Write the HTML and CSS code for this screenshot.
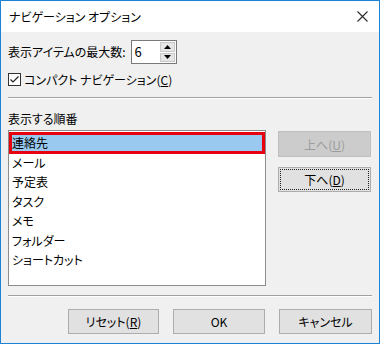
FILE: index.html
```html
<!DOCTYPE html>
<html lang="ja">
<head>
<meta charset="utf-8">
<link rel="stylesheet" href="styles.css">
</head>
<body>
<div class="win">
  <div class="titlebar">
    <span class="title">ナビゲーション オプション</span>
    <svg class="close" width="11" height="11" viewBox="0 0 11 11"><path d="M0.5 0.5L10.5 10.5M10.5 0.5L0.5 10.5" stroke="#2b2b2b" stroke-width="1.1" fill="none"/></svg>
  </div>
  <div class="content">
    <div class="row-max">
      <span class="lbl">表示アイテムの最大数:</span>
      <div class="spin">
        <span class="spin-val">6</span>
        <div class="spin-btns">
          <div class="sb"><svg width="7" height="4" viewBox="0 0 7 4"><path d="M0 4L3.5 0L7 4Z" fill="#000"/></svg></div>
          <div class="sb"><svg width="7" height="4" viewBox="0 0 7 4"><path d="M0 0L3.5 4L7 0Z" fill="#000"/></svg></div>
        </div>
      </div>
    </div>
    <div class="row-check">
      <svg class="cb" width="13" height="13" viewBox="0 0 13 13"><rect x="0.5" y="0.5" width="12" height="12" fill="#fff" stroke="#333"/><path d="M2.5 6.5L5 9L10.5 3.5" stroke="#222" stroke-width="1.2" fill="none"/></svg>
      <span class="lbl">コンパクト ナビゲーション(<u>C</u>)</span>
    </div>
    <div class="sep"></div>
    <div class="lbl order-lbl">表示する順番</div>
    <div class="order">
      <ul class="list">
        <li class="sel">連絡先</li>
        <li>メール</li>
        <li>予定表</li>
        <li>タスク</li>
        <li>メモ</li>
        <li>フォルダー</li>
        <li>ショートカット</li>
      </ul>
      <div class="side">
        <button class="btn disabled">上へ(<u>U</u>)</button>
        <button class="btn focus">下へ(<u>D</u>)</button>
      </div>
    </div>
    <div class="sep sep2"></div>
    <div class="footer">
      <button class="btn b1">リセット(<u>R</u>)</button>
      <button class="btn b2">OK</button>
      <button class="btn b3">キャンセル</button>
    </div>
  </div>
</div>
</body>
</html>
```
FILE: styles.css
```css
* { box-sizing: border-box; }
html, body { margin: 0; padding: 0; background: #fff; }
body {
  font-family: "Noto Sans CJK JP", "Noto Sans", sans-serif;
  font-size: 12px;
  font-feature-settings: "palt" 1;
  color: #000;
}
.win {
  width: 380px;
  height: 344px;
  border: 1px solid #1883d7;
  background: #f0f0f0;
  display: flex;
  flex-direction: column;
}
.titlebar {
  height: 31px;
  background: #fff;
  display: flex;
  align-items: center;
  justify-content: space-between;
  padding: 0 11px 0 8px;
}
.title { font-size: 12px; line-height: 16px; }
.close { display: block; }
.content {
  padding: 8px 7px 0 7px;
  display: flex;
  flex-direction: column;
}
.lbl { line-height: 16px; white-space: nowrap; }
.row-max {
  display: flex;
  align-items: center;
  gap: 5px;
  height: 24px;
}
.spin {
  width: 46px;
  height: 24px;
  border: 1px solid #7a7a7a;
  background: #fff;
  display: flex;
}
.spin-val {
  flex: 1;
  padding-left: 3px;
  line-height: 21px;
  font-size: 13px;
}
.spin-btns {
  width: 17px;
  display: flex;
  flex-direction: column;
  gap: 1px;
  padding: 1px;
}
.sb {
  flex: 1;
  background: #e6e6e6;
  border: 1px solid #c8c8c8;
  display: flex;
  align-items: center;
  justify-content: center;
}
.sb svg { display: block; }
.row-check {
  display: flex;
  align-items: center;
  gap: 3px;
  margin-top: 7px;
  height: 17px;
}
.cb { display: block; flex: none; }
.sep {
  margin-top: 9px;
  height: 2px;
  border-top: 1px solid #a0a0a0;
  border-bottom: 1px solid #fff;
}
.order-lbl { margin-top: 12px; }
.order {
  margin-top: 3px;
  display: flex;
  gap: 12px;
  align-items: flex-start;
}
.list {
  list-style: none;
  margin: 0;
  width: 258px;
  height: 156px;
  border: 1px solid #8c8c8c;
  background: #fff;
  padding: 1px 1px 0 1px;
}
.list li {
  height: 19.5px;
  line-height: 19.5px;
  padding-left: 2px;
  white-space: nowrap;
}
.list li.sel {
  background: #99c9ef;
  outline: 3px solid #e8000f;
  outline-offset: -2px;
  margin-top: 1px;
}
.side {
  display: flex;
  flex-direction: column;
  gap: 10px;
  padding-top: 1px;
}
.btn {
  font: inherit;
  font-feature-settings: "palt" 1;
  color: #000;
  background: #e1e1e1;
  border: 1px solid #adadad;
  width: 93px;
  height: 26px;
  padding: 0;
  margin: 0;
}
.btn.disabled {
  background: #cccccc;
  border-color: #bfbfbf;
  color: #9b9b9b;
}
.btn.focus {
  height: 25px;
  outline: 1px dotted #222;
  outline-offset: -3px;
}
.sep2 { margin-top: 9px; }
.footer {
  margin-top: 12px;
  display: flex;
  justify-content: flex-end;
  gap: 14px;
  padding-right: 0;
}
.footer .btn { height: 25px; }
.footer .b1 { width: 91px; }
.footer .b2 { width: 92px; }
.footer .b3 { width: 93px; }
```
